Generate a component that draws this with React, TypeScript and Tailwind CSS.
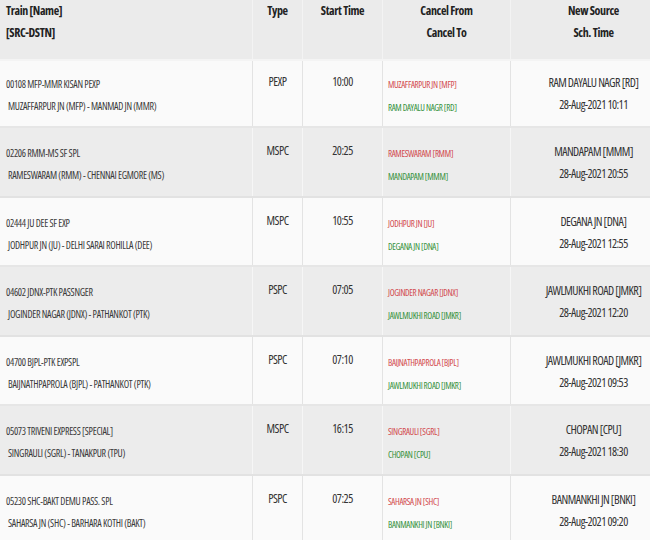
type Row = {
  no: string;
  route: string;
  type: string;
  start: string;
  from: string;
  to: string;
  source: string;
  time: string;
};

const rows: Row[] = [
  {
    no: "00108 MFP-MMR KISAN PEXP",
    route: "MUZAFFARPUR JN (MFP) - MANMAD JN (MMR)",
    type: "PEXP",
    start: "10:00",
    from: "MUZAFFARPUR JN [MFP]",
    to: "RAM DAYALU NAGR [RD]",
    source: "RAM DAYALU NAGR [RD]",
    time: "28-Aug-2021 10:11",
  },
  {
    no: "02206 RMM-MS SF SPL",
    route: "RAMESWARAM (RMM) - CHENNAI EGMORE (MS)",
    type: "MSPC",
    start: "20:25",
    from: "RAMESWARAM [RMM]",
    to: "MANDAPAM [MMM]",
    source: "MANDAPAM [MMM]",
    time: "28-Aug-2021 20:55",
  },
  {
    no: "02444 JU DEE SF EXP",
    route: "JODHPUR JN (JU) - DELHI SARAI ROHILLA (DEE)",
    type: "MSPC",
    start: "10:55",
    from: "JODHPUR JN [JU]",
    to: "DEGANA JN [DNA]",
    source: "DEGANA JN [DNA]",
    time: "28-Aug-2021 12:55",
  },
  {
    no: "04602 JDNX-PTK PASSNGER",
    route: "JOGINDER NAGAR (JDNX) - PATHANKOT (PTK)",
    type: "PSPC",
    start: "07:05",
    from: "JOGINDER NAGAR [JDNX]",
    to: "JAWLMUKHI ROAD [JMKR]",
    source: "JAWLMUKHI ROAD [JMKR]",
    time: "28-Aug-2021 12:20",
  },
  {
    no: "04700 BJPL-PTK EXPSPL",
    route: "BAIJNATHPAPROLA (BJPL) - PATHANKOT (PTK)",
    type: "PSPC",
    start: "07:10",
    from: "BAIJNATHPAPROLA [BJPL]",
    to: "JAWLMUKHI ROAD [JMKR]",
    source: "JAWLMUKHI ROAD [JMKR]",
    time: "28-Aug-2021 09:53",
  },
  {
    no: "05073 TRIVENI EXPRESS [SPECIAL]",
    route: "SINGRAULI (SGRL) - TANAKPUR (TPU)",
    type: "MSPC",
    start: "16:15",
    from: "SINGRAULI [SGRL]",
    to: "CHOPAN [CPU]",
    source: "CHOPAN [CPU]",
    time: "28-Aug-2021 18:30",
  },
  {
    no: "05230 SHC-BAKT DEMU PASS. SPL",
    route: "SAHARSA JN (SHC) - BARHARA KOTHI (BAKT)",
    type: "PSPC",
    start: "07:25",
    from: "SAHARSA JN [SHC]",
    to: "BANMANKHI JN [BNKI]",
    source: "BANMANKHI JN [BNKI]",
    time: "28-Aug-2021 09:20",
  },
];

const cols = "grid grid-cols-[253px_50px_80px_128px_165px] w-[676px]";

const App = () => {
  return (
    <div className="w-[650px] h-[540px] overflow-hidden bg-[#fafafa] font-['Open_Sans',sans-serif] font-stretch-condensed text-[#333]">
      {/* Header */}
      <div className={`${cols} h-[61px] bg-[#ebebeb] border-b-2 border-[#f4f4f4] font-bold text-[12px] leading-[22px] tracking-[-0.4px] text-[#222]`}>
        <div className="border-r border-[#f3f3f3] pl-[6px]">
          <div>Train [Name]</div>
          <div>[SRC-DSTN]</div>
        </div>
        <div className="border-r border-[#f3f3f3] text-center">Type</div>
        <div className="border-r border-[#f3f3f3] text-center">Start Time</div>
        <div className="border-r border-[#f3f3f3] text-center">
          <div>Cancel From</div>
          <div>Cancel To</div>
        </div>
        <div className="text-center">
          <div>New Source</div>
          <div>Sch. Time</div>
        </div>
      </div>

      {/* Rows */}
      {rows.map((r, i) => {
        const gray = i % 2 === 1;
        const first = i === 0;
        const line = gray ? "border-[#f6f6f6]" : "border-[#e3e3e3]";
        return (
          <div
            key={r.no}
            className={`${cols} border-b-2 ${
              gray ? "bg-[#ececec] border-[#e2e2e2]" : "bg-[#fafafa] border-[#e6e6e6]"
            } ${first ? "h-[67px]" : "h-[69.5px]"}`}
          >
            <div
              className={`border-r ${line} pl-[6px] text-[10px] leading-[22px] tracking-[-0.3px] text-[#3a3a3a] ${
                first ? "pt-[12px]" : "pt-[14px]"
              }`}
            >
              <div className="whitespace-nowrap">{r.no}</div>
              <div className="whitespace-nowrap pl-[2px]">{r.route}</div>
            </div>
            <div
              className={`border-r ${line} text-center text-[12px] leading-[22px] tracking-[-0.5px] ${
                first ? "pt-[10px]" : "pt-[12px]"
              }`}
            >
              {r.type}
            </div>
            <div
              className={`border-r ${line} text-center text-[12px] leading-[22px] tracking-[-0.5px] ${
                first ? "pt-[10px]" : "pt-[12px]"
              }`}
            >
              {r.start}
            </div>
            <div
              className={`border-r ${line} pl-[5px] text-[9px] leading-[23px] tracking-[-0.35px] ${
                first ? "pt-[12px]" : "pt-[14px]"
              }`}
            >
              <div className="whitespace-nowrap text-[#d24a4e]">{r.from}</div>
              <div className="whitespace-nowrap text-[#35913a]">{r.to}</div>
            </div>
            <div
              className={`text-center text-[12px] leading-[22px] tracking-[-0.55px] ${
                first ? "pt-[11px]" : "pt-[13px]"
              }`}
            >
              <div className="whitespace-nowrap">{r.source}</div>
              <div className="whitespace-nowrap">{r.time}</div>
            </div>
          </div>
        );
      })}
    </div>
  );
};

export default App;
